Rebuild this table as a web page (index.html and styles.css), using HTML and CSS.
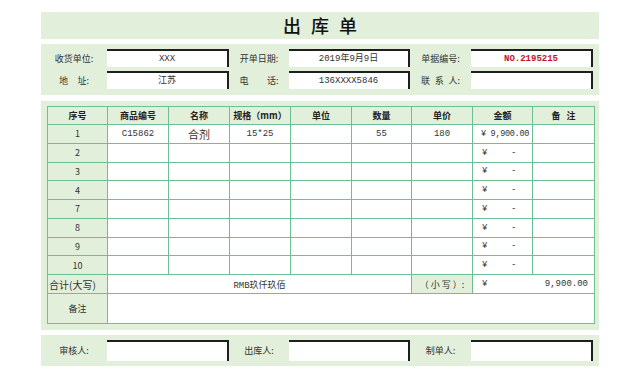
FILE: index.html
```html
<!DOCTYPE html>
<html lang="zh-CN">
<head>
<meta charset="utf-8">
<title>出库单</title>
<link rel="stylesheet" href="styles.css">
</head>
<body>
<div class="sheet">
  <div class="title">出库单</div>

  <div class="panel info">
    <div class="lbl">收货单位:</div>
    <div class="box">XXX</div>
    <div class="lbl">开单日期:</div>
    <div class="box">2019年9月9日</div>
    <div class="lbl">单据编号:</div>
    <div class="box red">NO.2195215</div>

    <div class="lbl"><span class="spread w30"><i>地</i><i>址:</i></span></div>
    <div class="box">江苏</div>
    <div class="lbl"><span class="spread w39"><i>电</i><i>话:</i></span></div>
    <div class="box">136XXXX5846</div>
    <div class="lbl"><span class="spread w39"><i>联</i><i>系</i><i>人:</i></span></div>
    <div class="box"></div>
  </div>

  <div class="panel tablepanel">
    <table class="grid">
      <colgroup>
        <col style="width:60px"><col style="width:61px"><col style="width:61px"><col style="width:61px"><col style="width:61px"><col style="width:60px"><col style="width:61px"><col style="width:60px"><col style="width:62px">
      </colgroup>
      <thead>
        <tr class="head">
          <th>序号</th><th>商品编号</th><th>名称</th><th>规格（mm）</th><th>单位</th><th>数量</th><th>单价</th><th>金额</th><th>备&nbsp;&nbsp;&nbsp;注</th>
        </tr>
      </thead>
      <tbody>
        <tr class="row">
          <td class="idx">1</td><td>C15862</td><td class="big">合剂</td><td>15*25</td><td></td><td>55</td><td>180</td><td class="amt first">¥ 9,900.00</td><td></td>
        </tr>
        <tr class="row"><td class="idx">2</td><td></td><td></td><td></td><td></td><td></td><td></td><td class="amt"><span class="yen">¥</span><span class="dash">-</span></td><td></td></tr>
        <tr class="row"><td class="idx">3</td><td></td><td></td><td></td><td></td><td></td><td></td><td class="amt"><span class="yen">¥</span><span class="dash">-</span></td><td></td></tr>
        <tr class="row"><td class="idx">4</td><td></td><td></td><td></td><td></td><td></td><td></td><td class="amt"><span class="yen">¥</span><span class="dash">-</span></td><td></td></tr>
        <tr class="row"><td class="idx">7</td><td></td><td></td><td></td><td></td><td></td><td></td><td class="amt"><span class="yen">¥</span><span class="dash">-</span></td><td></td></tr>
        <tr class="row"><td class="idx">8</td><td></td><td></td><td></td><td></td><td></td><td></td><td class="amt"><span class="yen">¥</span><span class="dash">-</span></td><td></td></tr>
        <tr class="row"><td class="idx">9</td><td></td><td></td><td></td><td></td><td></td><td></td><td class="amt"><span class="yen">¥</span><span class="dash">-</span></td><td></td></tr>
        <tr class="row"><td class="idx">10</td><td></td><td></td><td></td><td></td><td></td><td></td><td class="amt"><span class="yen">¥</span><span class="dash">-</span></td><td></td></tr>
        <tr class="total">
          <td class="idx left">合计(大写)</td>
          <td colspan="5">RMB玖仟玖佰</td>
          <td class="idx">（ 小 写 ）:</td>
          <td colspan="2" class="sum"><span class="yen">¥</span><span class="sumval">9,900.00</span></td>
        </tr>
        <tr class="remark">
          <td class="idx">备注</td>
          <td colspan="8"></td>
        </tr>
      </tbody>
    </table>
  </div>

  <div class="panel sign">
    <div class="lbl">审核人:</div>
    <div class="box"></div>
    <div class="lbl">出库人:</div>
    <div class="box"></div>
    <div class="lbl">制单人:</div>
    <div class="box"></div>
  </div>
</div>
</body>
</html>
```

FILE: styles.css
```css
* { box-sizing: border-box; }

body {
  margin: 0;
  background: #ffffff;
  color: #333333;
  font-family: "Liberation Mono", "Noto Sans CJK SC", monospace;
  font-size: 9px;
}

.sheet {
  width: 558px;
  margin-left: 41px;
  padding-top: 12px;
}

.title {
  height: 27px;
  background: #e2efda;
  text-align: center;
  font-family: "Noto Sans CJK SC", sans-serif;
  font-size: 18px;
  font-weight: 500;
  line-height: 27px;
  letter-spacing: 10px;
  padding-left: 10px;
  color: #111111;
  margin-bottom: 5px;
}

.panel {
  background: #e2efda;
}

.info, .sign {
  display: grid;
  grid-template-columns: 66px 122px 60px 121px 61px 122px;
  align-items: center;
}

.info {
  padding: 5px 0 6px 0;
  row-gap: 4px;
  margin-bottom: 6px;
}

.sign {
  padding: 5px 0 5px 0;
  margin-top: 5px;
}

.lbl {
  text-align: center;
  color: #333333;
  font-family: "Noto Sans CJK SC", sans-serif;
  font-size: 9px;
}

.spread {
  display: inline-flex;
  justify-content: space-between;
}
.spread i { font-style: normal; }
.w30 { width: 30px; }
.w39 { width: 39px; }

.box {
  height: 18px;
  background: #ffffff;
  border-top: 2px solid #1e1e1e;
  border-right: 2px solid #1e1e1e;
  text-align: center;
  line-height: 16px;
  font-size: 9px;
  color: #333333;
}

.sign .box { height: 21px; }

.red {
  color: #c0151b;
  font-weight: bold;
}

.tablepanel {
  padding: 5px 5px 6px 6px;
}

.grid {
  width: 547px;
  table-layout: fixed;
  border-collapse: collapse;
  background: #ffffff;
  border: 1px solid #5cb97f;
}

.grid th, .grid td {
  border: 1px solid #6dc091;
  padding: 0;
  text-align: center;
  vertical-align: middle;
  font-weight: normal;
  white-space: nowrap;
}

.grid th {
  background: #e2efda;
  font-family: "Noto Sans CJK SC", sans-serif;
  font-weight: bold;
  color: #222222;
}

.head { height: 18px; }
.row { height: 18.75px; }
.total { height: 19px; }
.remark { height: 30px; }

.grid td.idx {
  background: #e2efda;
  font-family: "Noto Sans CJK SC", sans-serif;
}

.grid td.left { text-align: left; padding-left: 1px; font-size: 10px; }

.big {
  font-family: "Noto Sans CJK SC", sans-serif;
  font-size: 11px;
}

.grid td.amt {
  text-align: left;
  padding-left: 9px;
}

.grid td.first {
  padding-left: 8px;
  font-size: 8.5px;
  letter-spacing: -0.3px;
}

.yen { display: inline-block; width: 29px; }
.dash { display: inline-block; }

.grid td.sum {
  text-align: left;
  padding-left: 9px;
  padding-right: 6px;
}

.sum .yen { float: left; width: auto; }
.sumval { float: right; }

.remark td.idx { font-size: 9px; }
```
